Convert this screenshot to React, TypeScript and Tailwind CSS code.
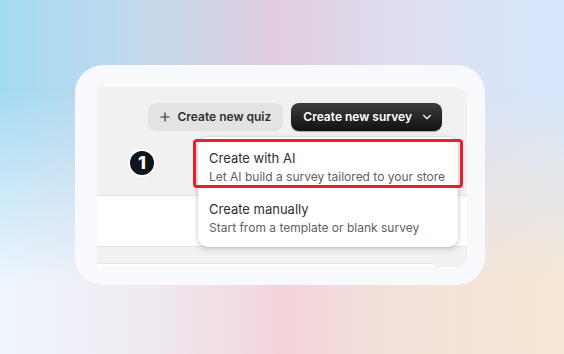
import { Plus, ChevronDown } from 'lucide-react';

export default function App() {
  return (
    <div className="relative w-[564px] h-[354px] overflow-hidden bg-[linear-gradient(to_right,#a2dbf4_0%,#c4d8ec_25%,#e2cfe0_50%,#dde0f2_75%,#d5e6fc_100%)] font-['Inter',sans-serif]">
      {/* lower wash of the backdrop */}
      <div className="absolute inset-0 bg-[linear-gradient(to_right,#eef6fe_0%,#f0e9f1_28%,#f3d3da_50%,#f3e2da_72%,#f6e8d5_100%)] [mask-image:linear-gradient(to_bottom,transparent_25%,black_80%)]" />

      <div className="relative pt-[65px] pl-[75px]">
        {/* Card */}
        <div className="w-[410px] h-[220px] rounded-[28px] bg-[#f8f9fc] pt-[22px] pl-[22px]">
          <div className="relative w-[370px] h-[180px] bg-[#f1f1f1] rounded-tl-[4px] rounded-tr-[12px] rounded-br-[12px] overflow-hidden flex flex-col">
            {/* Header buttons */}
            <div className="flex justify-end gap-2 pt-4 pr-[25px]">
              <button className="h-7 pl-2.5 pr-3 flex items-center gap-1.5 rounded-lg bg-[#e3e3e3] text-[#303030] text-[12px] font-semibold">
                <Plus className="w-3.5 h-3.5" strokeWidth={2} />
                Create new quiz
              </button>
              <button className="h-7 pl-3 pr-2 flex items-center gap-2 rounded-lg bg-[linear-gradient(#3d3d3d,#111111)] text-white text-[12px] font-semibold shadow-[0_1px_1px_rgba(0,0,0,0.3)]">
                Create new survey
                <ChevronDown className="w-3.5 h-3.5" strokeWidth={2} />
              </button>
            </div>

            {/* Badge row */}
            <div className="h-[64px] flex items-center pl-[31px]">
              <div className="w-[28px] h-[28px] rounded-full bg-[#0f1518] border-2 border-white flex items-center justify-center text-white text-[18px] font-extrabold leading-none">
                1
              </div>
            </div>

            {/* Table row */}
            <div className="h-[52px] bg-white border-t border-b border-[#e3e3e3]" />
            <div className="h-[16px]" />
            <div className="h-[4px] w-[338px] bg-white rounded-tr-[6px] border-t border-[#e6e6e6]" />

            {/* Dropdown */}
            <div className="absolute left-[101px] top-[50px] w-[260px] h-[110px] bg-white rounded-[10px] shadow-[0_2px_6px_rgba(0,0,0,0.18),0_0_0_1px_rgba(0,0,0,0.04)] flex flex-col pt-[6px]">
              <div className="px-[11px] py-[5px]">
                <p className="text-[13px] text-[#303030] leading-[20px]">Create with AI</p>
                <p className="text-[12px] text-[#616161] leading-[18px]">Let AI build a survey tailored to your store</p>
              </div>
              <div className="px-[11px] pt-[8px]">
                <p className="text-[13px] text-[#303030] leading-[20px]">Create manually</p>
                <p className="text-[12px] text-[#616161] leading-[18px]">Start from a template or blank survey</p>
              </div>
            </div>

            {/* Highlight */}
            <div className="absolute left-[96px] top-[52px] w-[270px] h-[49px] border-[3px] border-[#e8202a] rounded-[4px]" />
          </div>
        </div>
      </div>
    </div>
  );
}
